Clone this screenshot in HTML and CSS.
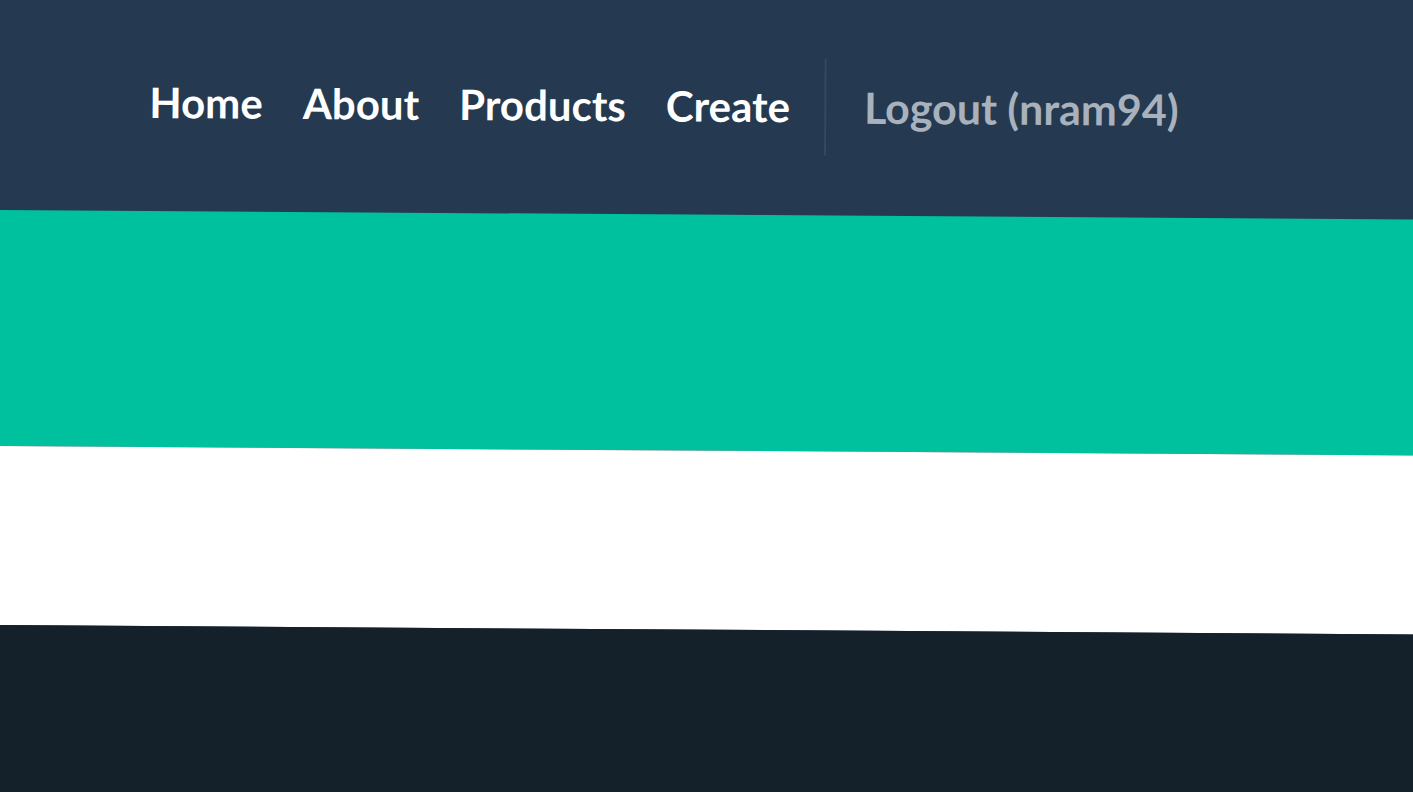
FILE: index.html
```html
<!DOCTYPE html>
<html lang="en">
<head>
<meta charset="utf-8">
<title>Products</title>
<link rel="stylesheet" href="styles.css">
</head>
<body>
<div class="page">
  <header class="navbar">
    <nav class="nav">
      <a class="nav-link" href="#">Home</a>
      <a class="nav-link" href="#">About</a>
      <a class="nav-link" href="#">Products</a>
      <a class="nav-link" href="#">Create</a>
      <span class="divider"></span>
      <a class="nav-link muted" href="#">Logout (nram94)</a>
    </nav>
  </header>
  <section class="hero"></section>
  <section class="content"></section>
  <footer class="footer"></footer>
</div>
</body>
</html>
```

FILE: styles.css
```css
html, body {
  margin: 0;
  padding: 0;
  height: 100%;
  overflow: hidden;
  background: #253a50;
}
body {
  font-family: "Lato", "Open Sans", sans-serif;
}
.page {
  width: 1440px;
  margin-top: -30px;
  transform: rotate(0.38deg);
  transform-origin: 0 30px;
}
.navbar {
  background: #253a50;
  height: 240px;
  padding-top: 30px;
  box-sizing: border-box;
  display: flex;
  align-items: center;
}
.nav {
  display: flex;
  align-items: center;
  padding-left: 130px;
  margin-top: -8px;
}
.nav-link {
  color: #ffffff;
  text-decoration: none;
  font-weight: 700;
  font-size: 42px;
  padding: 0 20px;
  line-height: 1;
}
.nav-link.muted {
  color: #a8b1bc;
  font-size: 43px;
}
.divider {
  width: 2px;
  height: 97px;
  background: #34485e;
  margin: 0 18px 0 14px;
}
.hero {
  background: #00c19d;
  height: 236px;
}
.content {
  background: #ffffff;
  height: 179px;
}
.footer {
  background: #14212b;
  height: 260px;
}
```
